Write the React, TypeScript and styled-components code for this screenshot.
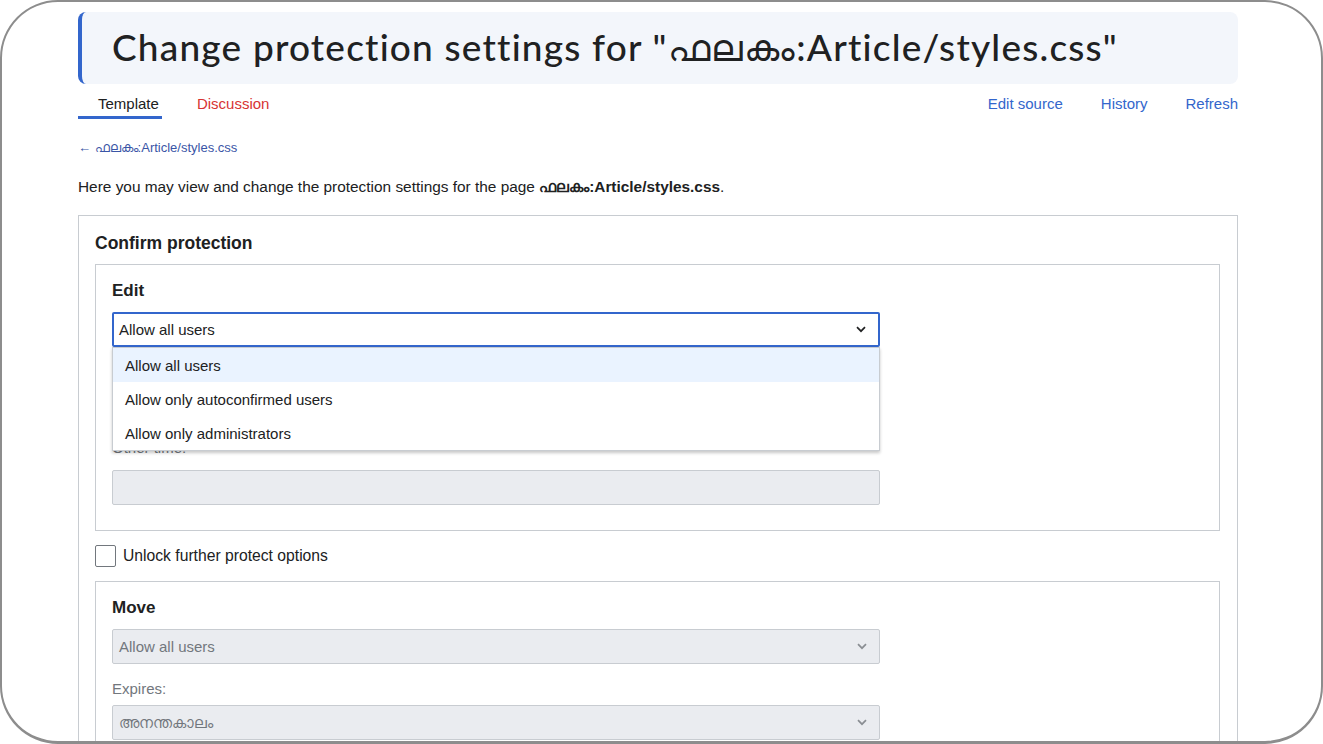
import React from 'react';
import styled, { createGlobalStyle } from 'styled-components';

const GlobalStyle = createGlobalStyle`
  html, body {
    margin: 0;
    padding: 0;
    background: #ffffff;
  }
  body {
    font-family: 'Liberation Sans', 'Noto Sans', sans-serif;
    color: #202122;
  }
`;

const Frame = styled.div`
  box-sizing: border-box;
  width: 1323px;
  height: 744px;
  border: 2px solid #8d8d8d;
  border-bottom-width: 3px;
  border-radius: 58px;
  overflow: hidden;
  background: #ffffff;
`;

const Content = styled.div`
  width: 1160px;
  margin: 10px 0 0 76px;
`;

const TitleBox = styled.div`
  height: 72px;
  display: flex;
  align-items: center;
  padding-left: 30px;
  background: #f3f6fb;
  border-left: 4px solid #3366cc;
  border-radius: 8px;
`;

const Title = styled.h1`
  margin: 0 0 2px;
  font-family: 'Lato', 'Noto Sans', sans-serif;
  font-weight: 500;
  font-size: 37px;
  color: #202122;
  letter-spacing: 1.2px;
`;

const TabBar = styled.div`
  display: flex;
  justify-content: space-between;
  height: 35px;
`;

const TabGroup = styled.div<{ $gap: number }>`
  display: flex;
  gap: ${(p) => p.$gap}px;
`;

const Tab = styled.a<{ $active?: boolean; $tone?: 'red' | 'blue' | 'dark' }>`
  display: flex;
  align-items: center;
  padding: ${(p) => (p.$active ? '6px 3px 0 20px' : '6px 0 0')};
  font-size: 15px;
  text-decoration: none;
  color: ${(p) => (p.$tone === 'red' ? '#d73333' : p.$tone === 'blue' ? '#3366cc' : '#202122')};
  border-bottom: 3px solid ${(p) => (p.$active ? '#3366cc' : 'transparent')};
  cursor: pointer;
`;

const BackLink = styled.a`
  display: block;
  margin-top: 20px;
  font-size: 13px;
  line-height: 17px;
  color: #3a55a6;
  text-decoration: none;
`;

const Intro = styled.p`
  margin: 20px 0 0;
  font-size: 15.4px;
  line-height: 22px;
`;

const Box = styled.div<{ $pad: string; $top?: number }>`
  position: relative;
  border: 1px solid #c8ccd1;
  padding: ${(p) => p.$pad};
  margin-top: ${(p) => p.$top ?? 0}px;
`;

const OuterBox = styled(Box)`
  height: 600px;
`;

const Legend = styled.div<{ $size?: number }>`
  font-weight: bold;
  font-size: ${(p) => p.$size ?? 17}px;
  line-height: 22px;
`;

const FieldLabel = styled.div<{ $muted?: boolean; $concealed?: boolean }>`
  margin-top: 14px;
  font-size: 15px;
  line-height: 22px;
  color: ${(p) => (p.$muted ? '#72777d' : '#202122')};
  visibility: ${(p) => (p.$concealed ? 'hidden' : 'visible')};
`;

const SelectWrap = styled.div<{ $gap?: number }>`
  position: relative;
  width: 768px;
  margin-top: ${(p) => p.$gap ?? 0}px;
`;

const Select = styled.div<{ $focused?: boolean; $disabled?: boolean; $concealed?: boolean }>`
  box-sizing: border-box;
  height: 35px;
  display: flex;
  align-items: center;
  justify-content: space-between;
  padding: 0 12px 0 ${(p) => (p.$focused ? '5px' : '6px')};
  font-size: 15px;
  color: ${(p) => (p.$disabled ? '#72777d' : '#202122')};
  background: ${(p) => (p.$disabled ? '#eaecf0' : '#ffffff')};
  border: ${(p) => (p.$focused ? '2px solid #3366cc' : '1px solid #c8ccd1')};
  border-radius: 2px;
  visibility: ${(p) => (p.$concealed ? 'hidden' : 'visible')};
`;

const TextInput = styled.div`
  box-sizing: border-box;
  width: 768px;
  height: 35px;
  margin-top: 11px;
  background: #eaecf0;
  border: 1px solid #c8ccd1;
  border-radius: 2px;
`;

const Menu = styled.ul`
  position: absolute;
  top: 35px;
  left: 0;
  right: 0;
  margin: 0;
  padding: 0;
  list-style: none;
  background: #ffffff;
  border: 1px solid #c8ccd1;
  box-shadow: 0 2px 3px rgba(0, 0, 0, 0.22);
  z-index: 2;
`;

const MenuItem = styled.li<{ $highlighted?: boolean }>`
  height: 34px;
  display: flex;
  align-items: center;
  padding-left: 12px;
  font-size: 15px;
  color: #202122;
  background: ${(p) => (p.$highlighted ? '#eaf3ff' : 'transparent')};
`;

const CheckRow = styled.label`
  display: flex;
  align-items: center;
  gap: 7px;
  margin: 14px 0 14px;
  font-size: 15.7px;
`;

const CheckBox = styled.span`
  box-sizing: border-box;
  width: 21px;
  height: 22px;
  border: 1px solid #72777d;
  border-radius: 2px;
  background: #ffffff;
`;

const Chevron = ({ color }: { color: string }) => (
  <svg width="10" height="7" viewBox="0 0 10 7">
    <path d="M1 1.2 L5 5.2 L9 1.2" fill="none" stroke={color} strokeWidth="1.7" />
  </svg>
);

const levels = ['Allow all users', 'Allow only autoconfirmed users', 'Allow only administrators'];

export default function App() {
  return (
    <>
      <GlobalStyle />
      <Frame>
        <Content>
          <TitleBox>
            <Title>Change protection settings for "ഫലകം:Article/styles.css"</Title>
          </TitleBox>

          <TabBar>
            <TabGroup $gap={35}>
              <Tab $active>Template</Tab>
              <Tab $tone="red">Discussion</Tab>
            </TabGroup>
            <TabGroup $gap={38}>
              <Tab $tone="blue">Edit source</Tab>
              <Tab $tone="blue">History</Tab>
              <Tab $tone="blue">Refresh</Tab>
            </TabGroup>
          </TabBar>

          <BackLink>← ഫലകം:Article/styles.css</BackLink>

          <Intro>
            Here you may view and change the protection settings for the page <b>ഫലകം:Article/styles.css</b>.
          </Intro>

          <OuterBox $pad="16px 17px 0 16px" $top={17}>
            <Legend $size={17.5}>Confirm protection</Legend>

            <Box $pad="15px 16px 25px 16px" $top={10}>
              <Legend>Edit</Legend>
              <SelectWrap $gap={10}>
                <Select $focused>
                  Allow all users
                  <Chevron color="#202122" />
                </Select>
                <Menu>
                  {levels.map((l, i) => (
                    <MenuItem key={l} $highlighted={i === 0}>
                      {l}
                    </MenuItem>
                  ))}
                </Menu>
              </SelectWrap>
              {/* expiry row sits under the open menu */}
              <FieldLabel $concealed>Expires:</FieldLabel>
              <SelectWrap $gap={5}>
                <Select $concealed>അനന്തകാലം</Select>
              </SelectWrap>
              <FieldLabel $muted>Other time:</FieldLabel>
              <TextInput />
            </Box>

            <CheckRow>
              <CheckBox />
              Unlock further protect options
            </CheckRow>

            <Box $pad="15px 16px 24px 16px">
              <Legend>Move</Legend>
              <SelectWrap $gap={10}>
                <Select $disabled>
                  Allow all users
                  <Chevron color="#8a8e93" />
                </Select>
              </SelectWrap>
              <FieldLabel $muted>Expires:</FieldLabel>
              <SelectWrap $gap={5}>
                <Select $disabled>
                  അനന്തകാലം
                  <Chevron color="#8a8e93" />
                </Select>
              </SelectWrap>
            </Box>
          </OuterBox>
        </Content>
      </Frame>
    </>
  );
}
